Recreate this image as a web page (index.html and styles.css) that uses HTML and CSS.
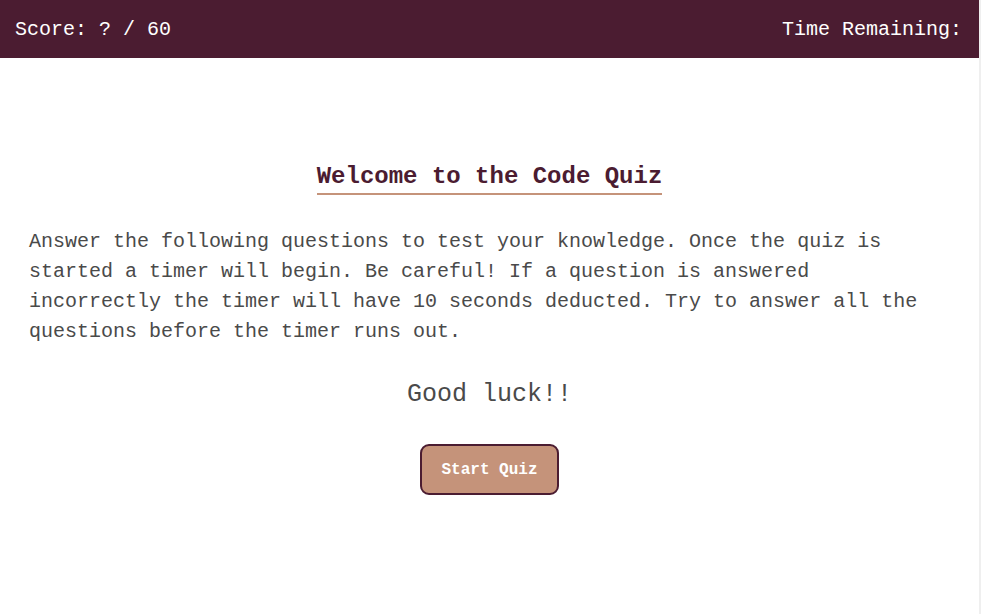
FILE: index.html
```html
<!DOCTYPE html>
<html>
<head>
<meta charset="utf-8">
<link rel="stylesheet" href="styles.css">
</head>
<body>
<div class="page">
  <header class="topbar">
    <span class="score">Score: ? / 60</span>
    <span class="timer">Time Remaining:</span>
  </header>
  <main class="intro">
    <h1 class="title">Welcome to the Code Quiz</h1>
    <p class="desc">Answer the following questions to test your knowledge. Once the quiz is started a timer will begin. Be careful! If a question is answered incorrectly the timer will have 10 seconds deducted. Try to answer all the questions before the timer runs out.</p>
    <p class="luck">Good luck!!</p>
    <button class="start">Start Quiz</button>
  </main>
</div>
</body>
</html>
```
FILE: styles.css
```css
html {
  background: #efefef;
  height: 100%;
}
body {
  margin: 0;
  height: 100%;
  font-family: "Courier New", "Nimbus Mono PS", "FreeMono", "Liberation Mono", monospace;
}
.page {
  margin-right: 2px;
  background: #ffffff;
  min-height: 100%;
}
.topbar {
  height: 58px;
  background: #4b1c31;
  color: #ffffff;
  display: flex;
  justify-content: space-between;
  align-items: center;
  padding: 0 17px 0 15px;
  font-size: 20px;
}
.intro {
  display: flex;
  flex-direction: column;
  align-items: center;
  padding: 104px 29px 0;
}
.title {
  margin: 0;
  font-size: 24px;
  font-weight: bold;
  color: #4b1c31;
  line-height: 30px;
  padding-bottom: 1px;
  border-bottom: 2px solid #c5937a;
}
.desc {
  margin: 32px 0 0;
  font-size: 20px;
  line-height: 30px;
  color: #4a4a4a;
  align-self: stretch;
}
.luck {
  margin: 33px 0 0;
  font-size: 25px;
  line-height: 30px;
  color: #4a4a4a;
}
.start {
  margin-top: 34px;
  width: 139px;
  height: 51px;
  background: #c5937a;
  border: 2px solid #4b1c31;
  border-radius: 9px;
  color: #ffffff;
  font-family: inherit;
  font-weight: bold;
  font-size: 16px;
}
```
